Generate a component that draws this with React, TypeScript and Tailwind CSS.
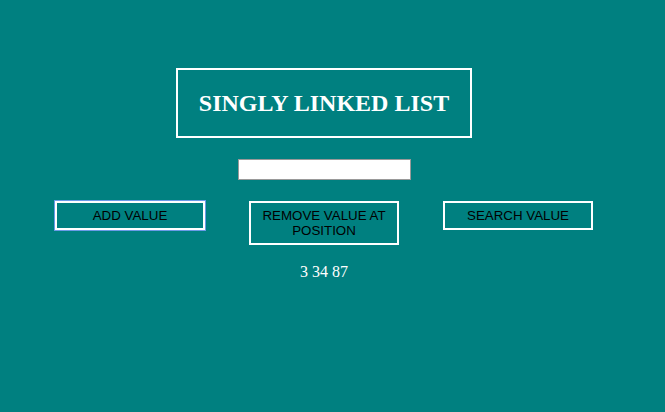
export default function App() {
  const values = [3, 34, 87];

  return (
    <div className="min-h-[412px] w-full bg-[#008080] font-['Liberation_Serif',serif]">
      <div className="w-[648px] flex flex-col items-center pt-[68px]">
        {/* Title */}
        <div className="w-[296px] h-[70px] border-2 border-white flex items-center justify-center">
          <h1 className="text-white font-bold text-[24px] leading-none">SINGLY LINKED LIST</h1>
        </div>

        {/* Input */}
        <input
          type="text"
          className="mt-[21px] w-[173px] h-[21px] bg-white border border-[#999999] outline-none"
        />

        {/* Buttons */}
        <div className="mt-[21px] flex items-start justify-center gap-[44px] font-['Liberation_Sans',Arial,sans-serif] text-[13.33px] leading-[15px] text-black">
          <button className="w-[150px] border-2 border-white py-[5px] px-[6px] outline outline-1 outline-[#6a9ae8] outline-offset-0">
            ADD VALUE
          </button>
          <button className="w-[150px] border-2 border-white py-[5px] px-[6px]">
            REMOVE VALUE AT POSITION
          </button>
          <button className="w-[150px] border-2 border-white py-[5px] px-[6px]">
            SEARCH VALUE
          </button>
        </div>

        {/* List output */}
        <p className="mt-[18px] text-white text-[16px] leading-[18px]">{values.join(" ")}</p>
      </div>
    </div>
  );
}
